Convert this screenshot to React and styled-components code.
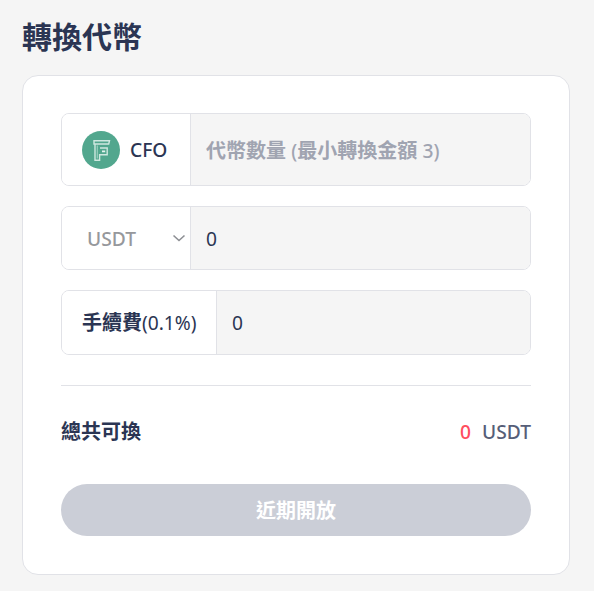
import styled, { createGlobalStyle } from "styled-components";

const Global = createGlobalStyle`
  html, body {
    margin: 0;
    padding: 0;
    background: #f5f5f5;
  }
  body {
    font-family: "Noto Sans", "Noto Sans CJK TC", sans-serif;
    color: #2b3553;
  }
  * { box-sizing: border-box; }
`;

const Page = styled.div`
  width: 594px;
  height: 591px;
  padding: 16px 24px 0 22px;
  overflow: hidden;
`;
const Title = styled.h2`
  margin: 0 0 17px;
  height: 42px;
  line-height: 42px;
  font-size: 30px;
  font-weight: 700;
  color: #2b3553;
`;
const Card = styled.div`
  height: 500px;
  padding: 37px 38px 0;
  background: #fff;
  border: 1px solid #e1e2e7;
  border-radius: 16px;
`;
const InputRow = styled.div`
  display: flex;
  height: ${props => props.height}px;
  margin-bottom: 20px;
  border: 1px solid #e1e2e7;
  border-radius: 8px;
  overflow: hidden;
`;
const Addon = styled.div`
  display: flex;
  align-items: center;
  flex: 0 0 ${props => props.width}px;
  padding-left: ${props => props.pad}px;
  background: #fff;
  border-right: 1px solid #e1e2e7;
`;
// latin runs sit slightly smaller than the 20px han text
const Latin = styled.span`
  font-size: 19.2px;
  font-weight: ${props => props.weight || 500};
`;
const TokenName = styled(Latin)`
  margin-left: 10px;
  color: #2b3553;
`;
const SelectText = styled(Latin)`
  flex: 1;
  color: #96989c;
  line-height: 30px;
  padding-top: 1px;
`;
const FeeLabel = styled.span`
  font-size: 20px;
  font-weight: 700;
  color: #2b3553;
  margin-top: -2px;
`;
const Field = styled.div`
  flex: 1;
  display: flex;
  align-items: center;
  padding-left: 15px;
  background: #f5f5f5;
  font-size: 20px;
  white-space: pre;
  color: ${props => (props.$placeholder ? "#a0a4b1" : "#2b3553")};
  font-weight: ${props => (props.$placeholder ? 700 : 400)};
`;
const Divider = styled.hr`
  margin: 30px 0 0;
  border: 0;
  border-top: 1px solid #e1e2e7;
`;
const TotalRow = styled.div`
  display: flex;
  justify-content: space-between;
  align-items: center;
  height: 28px;
  margin-top: 31px;
  font-size: 20px;
  font-weight: 700;
`;
const TotalLabel = styled.span`
  margin-top: -2px;
`;
const Amount = styled(Latin)`
  color: #ff4d5e;
  margin-right: 11px;
`;
const Unit = styled(Latin)`
  color: #565e78;
`;
const SubmitButton = styled.button`
  display: block;
  width: 100%;
  height: 52px;
  margin-top: 39px;
  padding: 0 0 2px;
  border: 0;
  border-radius: 26px;
  background: #cbced7;
  color: #fff;
  font-family: inherit;
  font-size: 20px;
  font-weight: 700;
`;

function CfoLogo() {
  return (
    <svg width="38" height="38" viewBox="0 0 38 38">
      <circle cx="19" cy="19" r="19" fill="#52a78e" />
      <path d="M12 9.8h15.5l-.8 3.2H12z" fill="none" stroke="#cfe8e0" strokeWidth="1.4" />
      <path d="M13 13v16.2h4.6v-5.4h7.6V17H18" fill="none" stroke="#cfe8e0" strokeWidth="1.4" />
      <path d="M20 20.4h3.2" fill="none" stroke="#e4f3ee" strokeWidth="1.6" />
      <path d="M15.3 14.5v13" stroke="#9bd0bf" strokeWidth="1.2" />
    </svg>
  );
}

function Chevron() {
  return (
    <svg width="14" height="14" viewBox="0 0 14 14" style={{ marginRight: 4 }}>
      <path d="M1.5 4.5 7 9.5l5.5-5" fill="none" stroke="#8d8f94" strokeWidth="1.6" />
    </svg>
  );
}

export default function App() {
  return (
    <Page>
      <Global />
      <Title>轉換代幣</Title>
      <Card>
        <InputRow height={73}>
          <Addon width={129} pad={20}>
            <CfoLogo />
            <TokenName>CFO</TokenName>
          </Addon>
          <Field $placeholder>
            <span>代幣數量 <Latin>(</Latin>最小轉換金額 <Latin>3)</Latin></span>
          </Field>
        </InputRow>
        <InputRow height={64}>
          <Addon width={129} pad={25}>
            <SelectText>USDT</SelectText>
            <Chevron />
          </Addon>
          <Field><Latin weight={400}>0</Latin></Field>
        </InputRow>
        <InputRow height={65}>
          <Addon width={155} pad={20}>
            <FeeLabel>手續費<Latin weight={400}>(0.1%)</Latin></FeeLabel>
          </Addon>
          <Field><Latin weight={400}>0</Latin></Field>
        </InputRow>
        <Divider />
        <TotalRow>
          <TotalLabel>總共可換</TotalLabel>
          <span>
            <Amount>0</Amount>
            <Unit>USDT</Unit>
          </span>
        </TotalRow>
        <SubmitButton>近期開放</SubmitButton>
      </Card>
    </Page>
  );
}
